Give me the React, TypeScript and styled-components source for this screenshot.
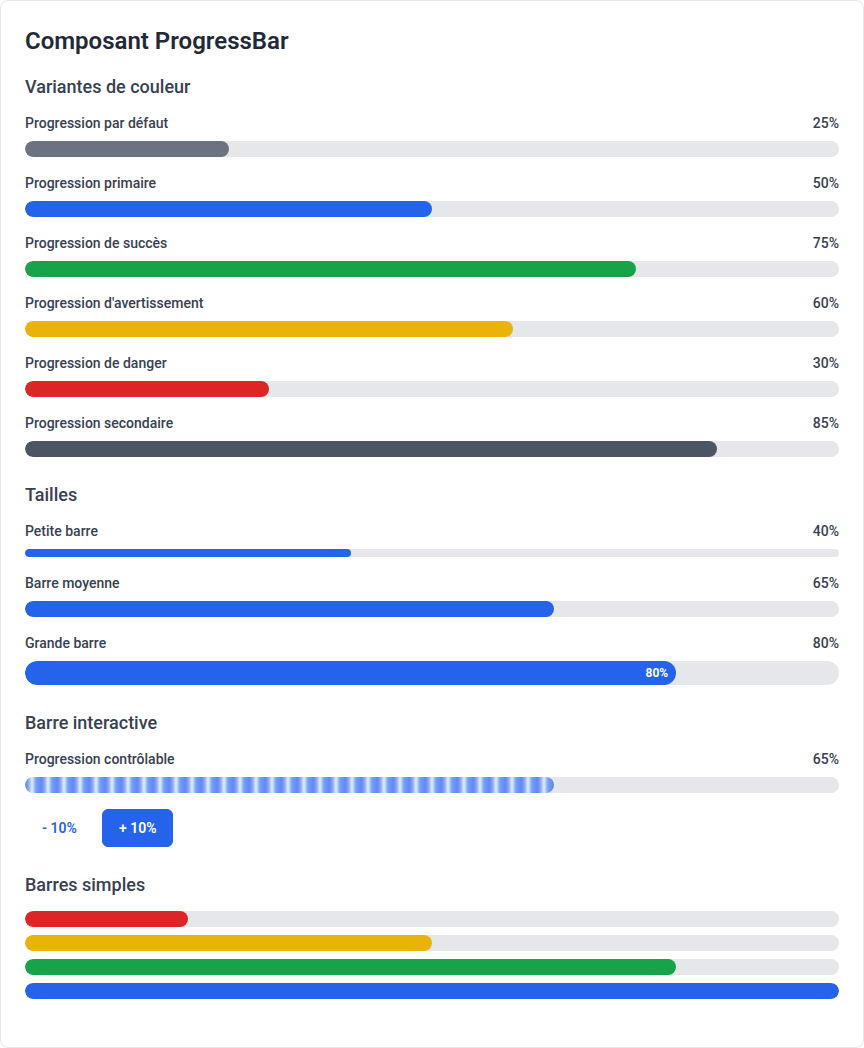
import React, { useState } from "react";
import styled, { createGlobalStyle } from "styled-components";

const GlobalStyle = createGlobalStyle`
  * { box-sizing: border-box; }
  html, body { margin: 0; padding: 0; background: #ffffff; }
  body { font-family: Roboto, "Noto Sans", sans-serif; color: #374151; }
`;

const Card = styled.div`
  min-height: 100vh;
  border: 1px solid #e5e7eb;
  border-radius: 8px;
  background: #ffffff;
  padding: 24px;
  display: flex;
  flex-direction: column;
`;

const Title = styled.h1`
  margin: 0 0 16px;
  font-size: 24px;
  line-height: 32px;
  font-weight: 600;
  color: #1f2937;
`;

const Section = styled.section`
  display: flex;
  flex-direction: column;
  & + & { margin-top: 24px; }
`;

const SectionTitle = styled.h2`
  margin: 0 0 12px;
  font-size: 18px;
  line-height: 28px;
  font-weight: 500;
  color: #374151;
`;

const Stack = styled.div<{ $gap: number }>`
  display: flex;
  flex-direction: column;
  gap: ${(p) => p.$gap}px;
`;

const Item = styled.div`
  display: flex;
  flex-direction: column;
  gap: 8px;
`;

const LabelRow = styled.div`
  display: flex;
  justify-content: space-between;
  align-items: center;
  font-size: 14px;
  line-height: 20px;
  font-weight: 500;
  color: #374151;
`;

const Track = styled.div<{ $h: number }>`
  width: 100%;
  height: ${(p) => p.$h}px;
  background: #e5e7eb;
  border-radius: 9999px;
  overflow: hidden;
`;

const Fill = styled.div<{ $color: string; $striped?: boolean }>`
  height: 100%;
  border-radius: 9999px;
  background: ${(p) =>
    p.$striped
      ? `repeating-linear-gradient(90deg, #5f89ee 0px, #7aa0f1 3px, #e4ecfd 7px, #7aa0f1 11px, #5f89ee 16px)`
      : p.$color};
  display: flex;
  align-items: center;
  justify-content: flex-end;
`;

const InnerLabel = styled.span`
  font-size: 12px;
  font-weight: 700;
  color: #ffffff;
  padding-right: 8px;
`;

const ButtonRow = styled.div`
  display: flex;
  gap: 8px;
  margin-top: 16px;
`;

const Button = styled.button<{ $primary?: boolean }>`
  font-family: inherit;
  font-size: 14px;
  line-height: 20px;
  font-weight: 600;
  padding: 8px 16px;
  border-radius: 6px;
  border: 1px solid ${(p) => (p.$primary ? "#2563eb" : "transparent")};
  background: ${(p) => (p.$primary ? "#2563eb" : "transparent")};
  color: ${(p) => (p.$primary ? "#ffffff" : "#2563eb")};
  cursor: pointer;
`;

const C = {
  default: "#6b7280",
  primary: "#2563eb",
  success: "#16a34a",
  warning: "#eab308",
  danger: "#dc2626",
  secondary: "#4b5563",
};

type BarProps = {
  label?: string;
  value: number;
  color: string;
  h?: number;
  inner?: boolean;
  striped?: boolean;
};

function Bar({ label, value, color, h = 16, inner, striped }: BarProps) {
  const track = (
    <Track $h={h}>
      <Fill $color={color} $striped={striped} style={{ width: `${value}%` }}>
        {inner && <InnerLabel>{value}%</InnerLabel>}
      </Fill>
    </Track>
  );
  if (!label) return track;
  return (
    <Item>
      <LabelRow>
        <span>{label}</span>
        <span>{value}%</span>
      </LabelRow>
      {track}
    </Item>
  );
}

export default function App() {
  const [v, setV] = useState(65);
  return (
    <>
      <GlobalStyle />
      <Card>
        <Title>Composant ProgressBar</Title>

        <Section>
          <SectionTitle>Variantes de couleur</SectionTitle>
          <Stack $gap={16}>
            <Bar label="Progression par défaut" value={25} color={C.default} />
            <Bar label="Progression primaire" value={50} color={C.primary} />
            <Bar label="Progression de succès" value={75} color={C.success} />
            <Bar label="Progression d'avertissement" value={60} color={C.warning} />
            <Bar label="Progression de danger" value={30} color={C.danger} />
            <Bar label="Progression secondaire" value={85} color={C.secondary} />
          </Stack>
        </Section>

        <Section>
          <SectionTitle>Tailles</SectionTitle>
          <Stack $gap={16}>
            <Bar label="Petite barre" value={40} color={C.primary} h={8} />
            <Bar label="Barre moyenne" value={65} color={C.primary} h={16} />
            <Bar label="Grande barre" value={80} color={C.primary} h={24} inner />
          </Stack>
        </Section>

        <Section>
          <SectionTitle>Barre interactive</SectionTitle>
          <Bar label="Progression contrôlable" value={v} color={C.primary} striped />
          <ButtonRow>
            <Button onClick={() => setV((x) => Math.max(0, x - 10))}>- 10%</Button>
            <Button $primary onClick={() => setV((x) => Math.min(100, x + 10))}>+ 10%</Button>
          </ButtonRow>
        </Section>

        <Section>
          <SectionTitle>Barres simples</SectionTitle>
          <Stack $gap={8}>
            <Bar value={20} color={C.danger} />
            <Bar value={50} color={C.warning} />
            <Bar value={80} color={C.success} />
            <Bar value={100} color={C.primary} />
          </Stack>
        </Section>
      </Card>
    </>
  );
}
